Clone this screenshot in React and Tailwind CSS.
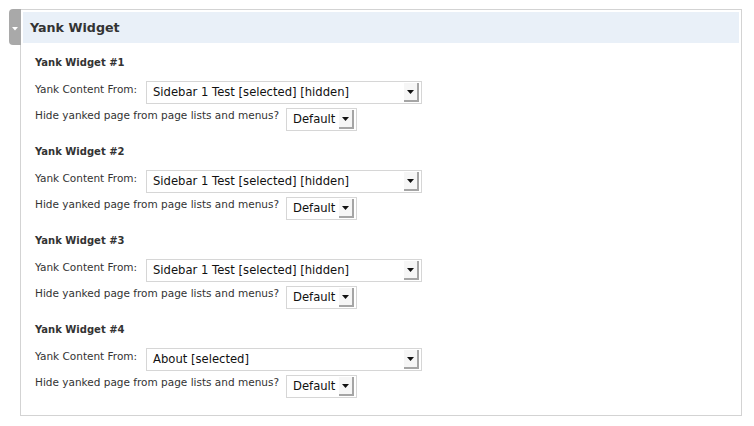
import React from 'react';

const widgets = [
  { id: 1, source: 'Sidebar 1 Test [selected] [hidden]' },
  { id: 2, source: 'Sidebar 1 Test [selected] [hidden]' },
  { id: 3, source: 'Sidebar 1 Test [selected] [hidden]' },
  { id: 4, source: 'About [selected]' },
];

function Arrow() {
  return (
    <div className="ml-auto mr-[2px] flex h-[19px] w-[15px] items-center justify-center border-b-2 border-r-2 border-[#a5a5a5] bg-[#f6f6f6]">
      <svg width="7" height="4" viewBox="0 0 7 4">
        <path d="M0 0h7L3.5 4z" fill="#111" />
      </svg>
    </div>
  );
}

function FakeSelect({ value, width }) {
  return (
    <div className={`flex h-[23px] items-center border border-[#d6d6d6] bg-white ${width}`}>
      <span className="pl-[6px] text-[11.6px] leading-none text-[#111] whitespace-nowrap">{value}</span>
      <Arrow />
    </div>
  );
}

function WidgetBlock({ widget }) {
  return (
    <div className="mb-[9px]">
      <div className="flex h-[22px] items-center text-[10px] font-bold text-[#333]">
        Yank Widget #{widget.id}
      </div>
      <div className="mt-[8px] flex items-start">
        <div className="w-[111px] pt-[1px] text-[10.5px] leading-[14px] text-[#333] whitespace-nowrap">
          Yank Content From:
        </div>
        <FakeSelect value={widget.source} width="w-[276px]" />
      </div>
      <div className="mt-[4px] flex items-start">
        <div className="w-[251px] text-[10.5px] leading-[14px] text-[#333] whitespace-nowrap">
          Hide yanked page from page lists and menus?
        </div>
        <FakeSelect value="Default" width="w-[71px]" />
      </div>
    </div>
  );
}

export default function App() {
  return (
    <div
      className="relative h-[426px] w-[754px] overflow-hidden bg-white pt-[9px] pl-[20px]"
      style={{ fontFamily: '"DejaVu Sans", "Liberation Sans", sans-serif' }}
    >
      {/* grey collapse handle */}
      <div className="absolute left-[9px] top-[9px] flex h-[36px] w-[12px] items-center justify-center rounded-l-[4px] bg-[#a9a9a9]">
        <svg width="6" height="4" viewBox="0 0 6 4" className="mt-[4px]">
          <path d="M0 0h6L3 3.5z" fill="#fff" />
        </svg>
      </div>

      <div className="h-[407px] w-[722px] border border-[#d3d3d3] p-[2px]">
        <div className="flex h-[31px] items-center bg-[#e9f0f8] pl-[7px] text-[12.7px] font-bold text-[#333]">
          Yank Widget
        </div>
        <div className="pl-[12px] pt-[8px]">
          {widgets.map((w) => (
            <WidgetBlock key={w.id} widget={w} />
          ))}
        </div>
      </div>
    </div>
  );
}
